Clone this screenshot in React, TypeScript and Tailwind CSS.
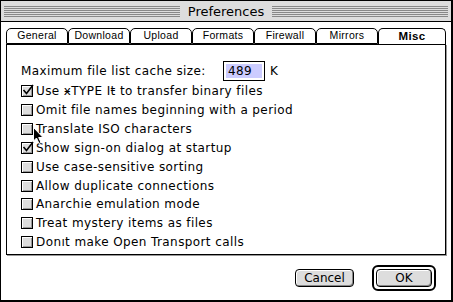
import React from "react";

const tabs = ["General", "Download", "Upload", "Formats", "Firewall", "Mirrors", "Misc"];

const options: { label: string; checked: boolean }[] = [
  { label: "Use ӿTYPE Iŧ to transfer binary files", checked: true },
  { label: "Omit file names beginning with a period", checked: false },
  { label: "Translate ISO characters", checked: false },
  { label: "Show sign-on dialog at startup", checked: true },
  { label: "Use case-sensitive sorting", checked: false },
  { label: "Allow duplicate connections", checked: false },
  { label: "Anarchie emulation mode", checked: false },
  { label: "Treat mystery items as files", checked: false },
  { label: "Don\u0131t make Open Transport calls", checked: false },
];

function Stripes() {
  return (
    <div className="flex h-[11px] flex-1 flex-col justify-between">
      {[0, 1, 2, 3, 4, 5].map((i) => (
        <div key={i} className="h-px bg-[#888888]" />
      ))}
    </div>
  );
}

function Checkbox({ checked }: { checked: boolean }) {
  return (
    <div className="relative h-[12px] w-[12px] shrink-0 border border-black bg-[#dddddd] shadow-[inset_1px_1px_0_#ffffff,inset_-1px_-1px_0_#999999]">
      {checked && (
        <svg className="absolute -top-[2px] left-0" width="12" height="12" viewBox="0 0 12 12">
          <path d="M1.5 6 L4.5 9.5 L11 1" stroke="#000" strokeWidth="1.6" fill="none" />
        </svg>
      )}
    </div>
  );
}

function Cursor() {
  return (
    <svg className="absolute left-[33px] top-[127px]" width="12" height="18" viewBox="0 0 12 18">
      <path d="M0.5 0.5 L0.5 14 L3.5 11 L6 16.5 L8 15.5 L5.7 10.5 L10 10.5 Z" fill="#000" stroke="#fff" strokeWidth="1" />
    </svg>
  );
}

export default function App() {
  return (
    <div className="relative h-[302px] w-[453px] bg-white font-['DejaVu_Sans',sans-serif] text-[12px] text-black">
      <div className="flex h-full w-full flex-col border-t border-l border-black border-r-[2px] border-b-[2px]">
        {/* title bar */}
        <div className="flex h-[21px] items-center gap-[6px] border-b border-black bg-[#dddddd] px-[3px]">
          <Stripes />
          <span className="px-[2px] text-[13px] leading-none">Preferences</span>
          <Stripes />
        </div>

        <div className="flex flex-1 flex-col px-[5px] pt-[5px]">
          {/* tabs */}
          <div className="flex h-[17px] items-end">
            {tabs.map((t) => {
              const active = t === "Misc";
              return (
                <div
                  key={t}
                  className={
                    active
                      ? "-mb-px flex h-[17px] w-[68px] items-center justify-center rounded-t-[5px] border border-b-0 border-black bg-white font-['Liberation_Sans',sans-serif] text-[11.5px] font-bold tracking-[0.3px]"
                      : "flex h-[16px] w-[62px] items-center justify-center rounded-t-[5px] border border-black bg-white font-['Liberation_Sans',sans-serif] text-[10.5px] tracking-[0.3px]"
                  }
                >
                  {t}
                </div>
              );
            })}
          </div>

          {/* panel */}
          <div className="flex h-[211px] flex-col border border-black bg-white px-[14px] pt-[16px] tracking-[0.4px] shadow-[1px_1px_0_#999999]">
            <div className="flex h-[20px] items-center">
              <span className="w-[202px]">Maximum file list cache size:</span>
              <div className="flex h-[20px] w-[42px] items-center border border-black p-[2px]">
                <div className="flex h-full w-full items-center bg-[#ccccff] px-[2px]">489</div>
              </div>
              <span className="ml-[5px]">K</span>
            </div>
            <div className="mt-px flex flex-col">
              {options.map((o) => (
                <div key={o.label} className="flex h-[18.85px] items-center gap-[3px]">
                  <Checkbox checked={o.checked} />
                  <span>{o.label}</span>
                </div>
              ))}
            </div>
          </div>

          {/* buttons */}
          <div className="flex flex-1 items-center justify-end gap-[18px] pr-[10px]">
            <button className="h-[18px] w-[59px] rounded-[4px] border border-black bg-[#dddddd] text-[12px] leading-none shadow-[inset_1px_1px_0_#ffffff,inset_-1px_-1px_0_#888888]">
              Cancel
            </button>
            <div className="rounded-[6px] border-[2px] border-black p-[2px]">
              <button className="block h-[18px] w-[56px] rounded-[4px] border border-black bg-[#dddddd] text-[12px] leading-none shadow-[inset_1px_1px_0_#ffffff,inset_-1px_-1px_0_#888888]">
                OK
              </button>
            </div>
          </div>
        </div>
      </div>
      <Cursor />
    </div>
  );
}
